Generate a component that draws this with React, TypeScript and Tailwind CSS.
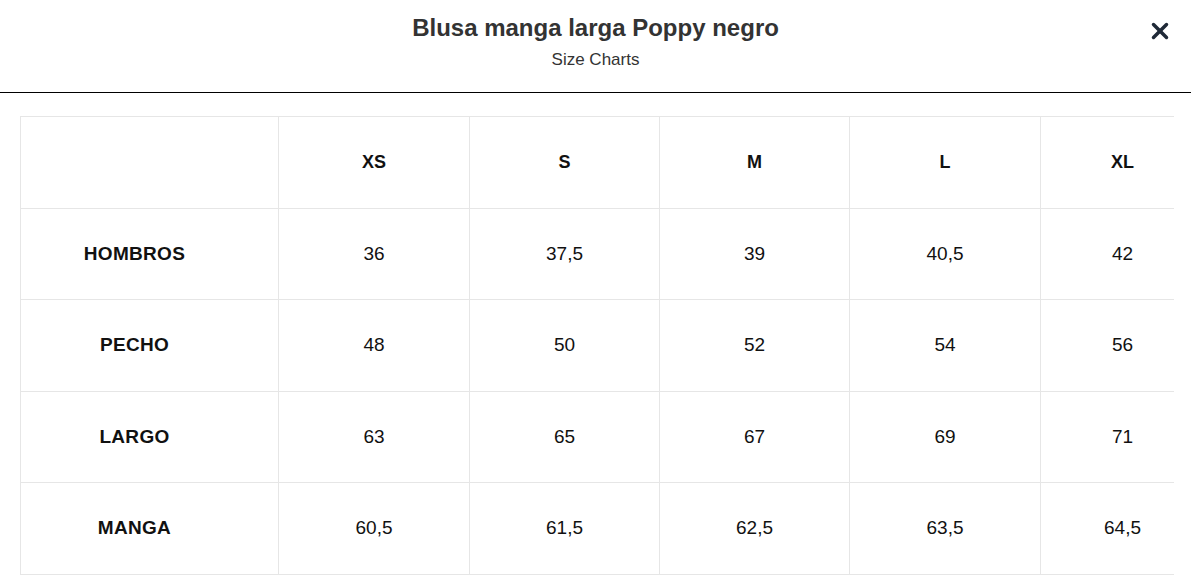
import { X } from "lucide-react";

const sizes = ["XS", "S", "M", "L", "XL"];

const rows: { label: string; values: string[] }[] = [
  { label: "HOMBROS", values: ["36", "37,5", "39", "40,5", "42"] },
  { label: "PECHO", values: ["48", "50", "52", "54", "56"] },
  { label: "LARGO", values: ["63", "65", "67", "69", "71"] },
  { label: "MANGA", values: ["60,5", "61,5", "62,5", "63,5", "64,5"] },
];

const colWidths = ["w-[258px]", "w-[191px]", "w-[190px]", "w-[190px]", "w-[191px]", "w-[164px]"];

export default function App() {
  return (
    <div className="h-[580px] w-[1191px] overflow-hidden bg-white font-['Liberation_Sans',Arial,sans-serif] text-[#111]">
      <header className="relative flex h-[93px] flex-col items-center border-b border-black pt-[12px]">
        <h2 className="text-[24px] font-bold leading-[32px] text-[#333]">Blusa manga larga Poppy negro</h2>
        <p className="mt-[6px] text-[17px] leading-[20px] text-[#333]">Size Charts</p>
        <button className="absolute right-[18px] top-[18px] text-[#1f2937]" aria-label="Cerrar">
          <X className="h-[26px] w-[26px]" strokeWidth={3.2} />
        </button>
      </header>

      <div className="ml-5 mr-[17px] mt-[23px] overflow-hidden">
        <table className="w-[1184px] table-fixed border-collapse">
          <colgroup>
            {colWidths.map((w, i) => (
              <col key={i} className={w} />
            ))}
          </colgroup>
          <thead>
            <tr className="h-[91.6px]">
              <th className="border border-[#e6e6e6]" />
              {sizes.map((s) => (
                <th key={s} className="border border-[#e6e6e6] text-center text-[18px] font-bold">
                  {s}
                </th>
              ))}
            </tr>
          </thead>
          <tbody>
            {rows.map((row) => (
              <tr key={row.label} className="h-[91.6px]">
                <th className="border border-[#e6e6e6] pr-[30px] text-center text-[19px] font-bold tracking-[0.3px]">
                  {row.label}
                </th>
                {row.values.map((v, i) => (
                  <td key={i} className="border border-[#e6e6e6] text-center text-[19px]">
                    {v}
                  </td>
                ))}
              </tr>
            ))}
          </tbody>
        </table>
      </div>
    </div>
  );
}
